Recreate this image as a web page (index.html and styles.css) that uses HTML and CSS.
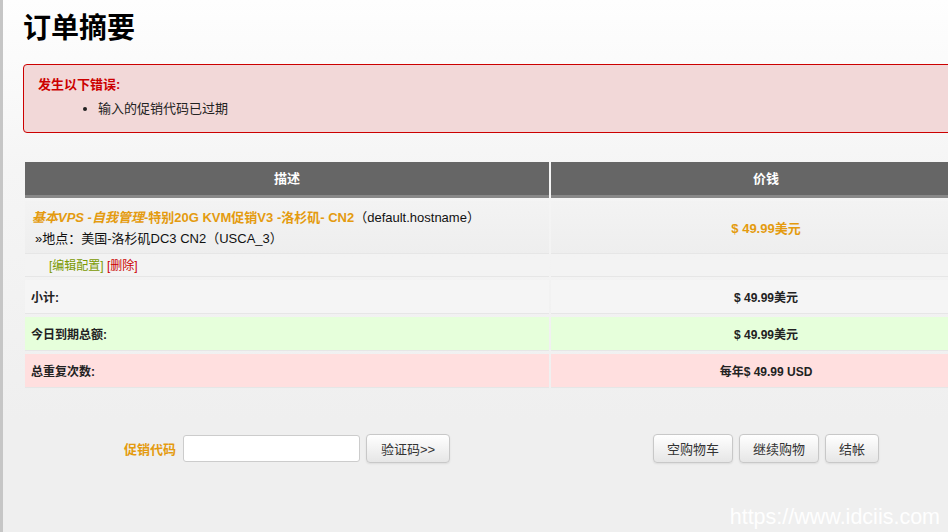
FILE: index.html
```html
<!DOCTYPE html>
<html lang="zh-CN">
<head>
<meta charset="utf-8">
<title>订单摘要</title>
<link rel="stylesheet" href="styles.css">
</head>
<body>
<div class="frame">
  <div class="page">
    <h1 class="title">订单摘要</h1>

    <div class="error-box">
      <div class="error-title">发生以下错误:</div>
      <ul class="error-list">
        <li>输入的促销代码已过期</li>
      </ul>
    </div>

    <table class="cart">
      <thead>
        <tr>
          <th class="col-desc">描述</th>
          <th class="col-price">价钱</th>
        </tr>
      </thead>
      <tbody>
        <tr class="row-product">
          <td class="cell-desc">
            <div class="prod-line"><strong class="prod-name"><em>基本VPS -自我管理</em>-特别20G KVM促销V3 -洛杉矶- CN2</strong>（default.hostname）</div>
            <div class="prod-loc">»地点：美国-洛杉矶DC3 CN2（USCA_3）</div>
          </td>
          <td class="cell-price prod-price">$ 49.99美元</td>
        </tr>
        <tr class="row-actions">
          <td class="cell-actions"><a class="link-edit" href="#">[编辑配置]</a> <a class="link-del" href="#">[删除]</a></td>
          <td></td>
        </tr>
        <tr class="row-sub">
          <td class="cell-label">小计:</td>
          <td class="cell-value">$ 49.99美元</td>
        </tr>
        <tr class="row-today">
          <td class="cell-label">今日到期总额:</td>
          <td class="cell-value">$ 49.99美元</td>
        </tr>
        <tr class="row-recur">
          <td class="cell-label">总重复次数:</td>
          <td class="cell-value">每年$ 49.99 USD</td>
        </tr>
      </tbody>
    </table>

    <div class="actions">
      <form class="promo" onsubmit="return false">
        <label class="promo-label" for="promo">促销代码</label>
        <input class="promo-input" id="promo" type="text">
        <button class="btn btn-wide" type="button">验证码&gt;&gt;</button>
      </form>
      <div class="cart-buttons">
        <button class="btn" type="button">空购物车</button>
        <button class="btn" type="button">继续购物</button>
        <button class="btn" type="button">结帐</button>
      </div>
    </div>
  </div>
  <div class="watermark">https://www.idciis.com</div>
</div>
</body>
</html>
```
FILE: styles.css
```css
html, body {
  margin: 0;
  padding: 0;
  height: 100%;
  overflow: hidden;
}

body {
  font-family: "Liberation Sans", Arial, "Noto Sans CJK SC", sans-serif;
  font-size: 13px;
  color: #333;
  background: #efefef;
}

.frame {
  position: relative;
  min-height: 100%;
  border-left: 3px solid #c6c6c6;
  background: linear-gradient(#fefefe 0px, #f5f5f5 170px, #efefef 420px, #efefef 100%);
}

.page {
  width: 960px;
  margin-left: 20px;
  padding-top: 12px;
}

.title {
  margin: 0;
  font-size: 28px;
  line-height: 34px;
  font-weight: bold;
  color: #000;
}

.error-box {
  margin-top: 18px;
  border: 1px solid #cc0000;
  border-radius: 4px;
  background: #f2d8d8;
  padding: 11px 14px 14px;
}

.error-title {
  color: #cc0000;
  font-weight: bold;
  font-size: 13px;
  line-height: 18px;
}

.error-list {
  margin: 6px 0 0;
  padding-left: 60px;
  font-size: 13px;
  line-height: 18px;
  color: #222;
}

.cart {
  width: 960px;
  margin-top: 26px;
  border-collapse: separate;
  border-spacing: 2px 3px;
  font-size: 12px;
}

.cart th {
  background: #666;
  color: #fff;
  font-weight: bold;
  font-size: 13px;
  height: 33px;
  line-height: 33px;
  padding: 0;
  text-align: center;
  border-bottom: 3px solid #888;
}

.col-desc {
  width: 524px;
}

.cart td {
  padding: 0;
  border-bottom: 1px solid #e6e6e6;
}

.row-product td {
  background: linear-gradient(#f3f3f3, #eeeeee);
}

.cell-desc {
  padding: 6px 7px 4px !important;
  font-size: 13px;
  line-height: 21px;
  color: #111;
}

.prod-name {
  color: #e49b0f;
}

.prod-name em {
  font-style: italic;
}

.prod-loc {
  margin-left: 3px;
}

.prod-price {
  text-align: center;
  color: #e49b0f;
  font-weight: bold;
  font-size: 13px;
}

.row-actions td {
  background: #f3f3f3;
  height: 19px;
}

.cell-actions {
  padding-left: 24px !important;
  font-size: 12px;
  line-height: 19px;
}

.link-edit {
  color: #7a9a00;
  text-decoration: none;
}

.link-del {
  color: #cc0000;
  text-decoration: none;
}

.cell-label {
  padding-left: 6px !important;
  font-weight: bold;
  height: 33px;
  color: #222;
}

.cell-value {
  text-align: center;
  font-weight: bold;
  color: #222;
}

.row-sub td {
  background: #f5f5f5;
}

.row-today td {
  background: #e6ffdb;
}

.row-recur td {
  background: #ffdfdf;
}

.actions {
  display: flex;
  justify-content: space-between;
  align-items: center;
  margin-top: 43px;
  padding: 0 104px 0 101px;
}

.promo {
  display: flex;
  align-items: center;
  gap: 6px;
  margin: 0;
}

.promo-label {
  color: #e49b0f;
  font-weight: bold;
  font-size: 13px;
  margin-right: 1px;
}

.promo-input {
  width: 177px;
  height: 27px;
  box-sizing: border-box;
  border: 1px solid #ccc;
  border-radius: 3px;
  background: #fff;
  margin: 0;
}

.cart-buttons {
  display: flex;
  gap: 6px;
}

.btn {
  height: 29px;
  box-sizing: border-box;
  padding: 0 13px;
  border: 1px solid #c8c8c8;
  border-radius: 4px;
  background: linear-gradient(#ffffff, #e6e6e6);
  box-shadow: 0 1px 2px rgba(0, 0, 0, 0.08);
  font-family: "Liberation Sans", Arial, "Noto Sans CJK SC", sans-serif;
  font-size: 13px;
  color: #333;
  cursor: pointer;
}

.btn-wide {
  padding: 0 14px;
}

.watermark {
  position: absolute;
  right: 8px;
  bottom: 2px;
  font-family: "Liberation Sans", Arial, sans-serif;
  font-size: 21.5px;
  line-height: 26px;
  color: rgba(255, 255, 255, 0.95);
}
```
